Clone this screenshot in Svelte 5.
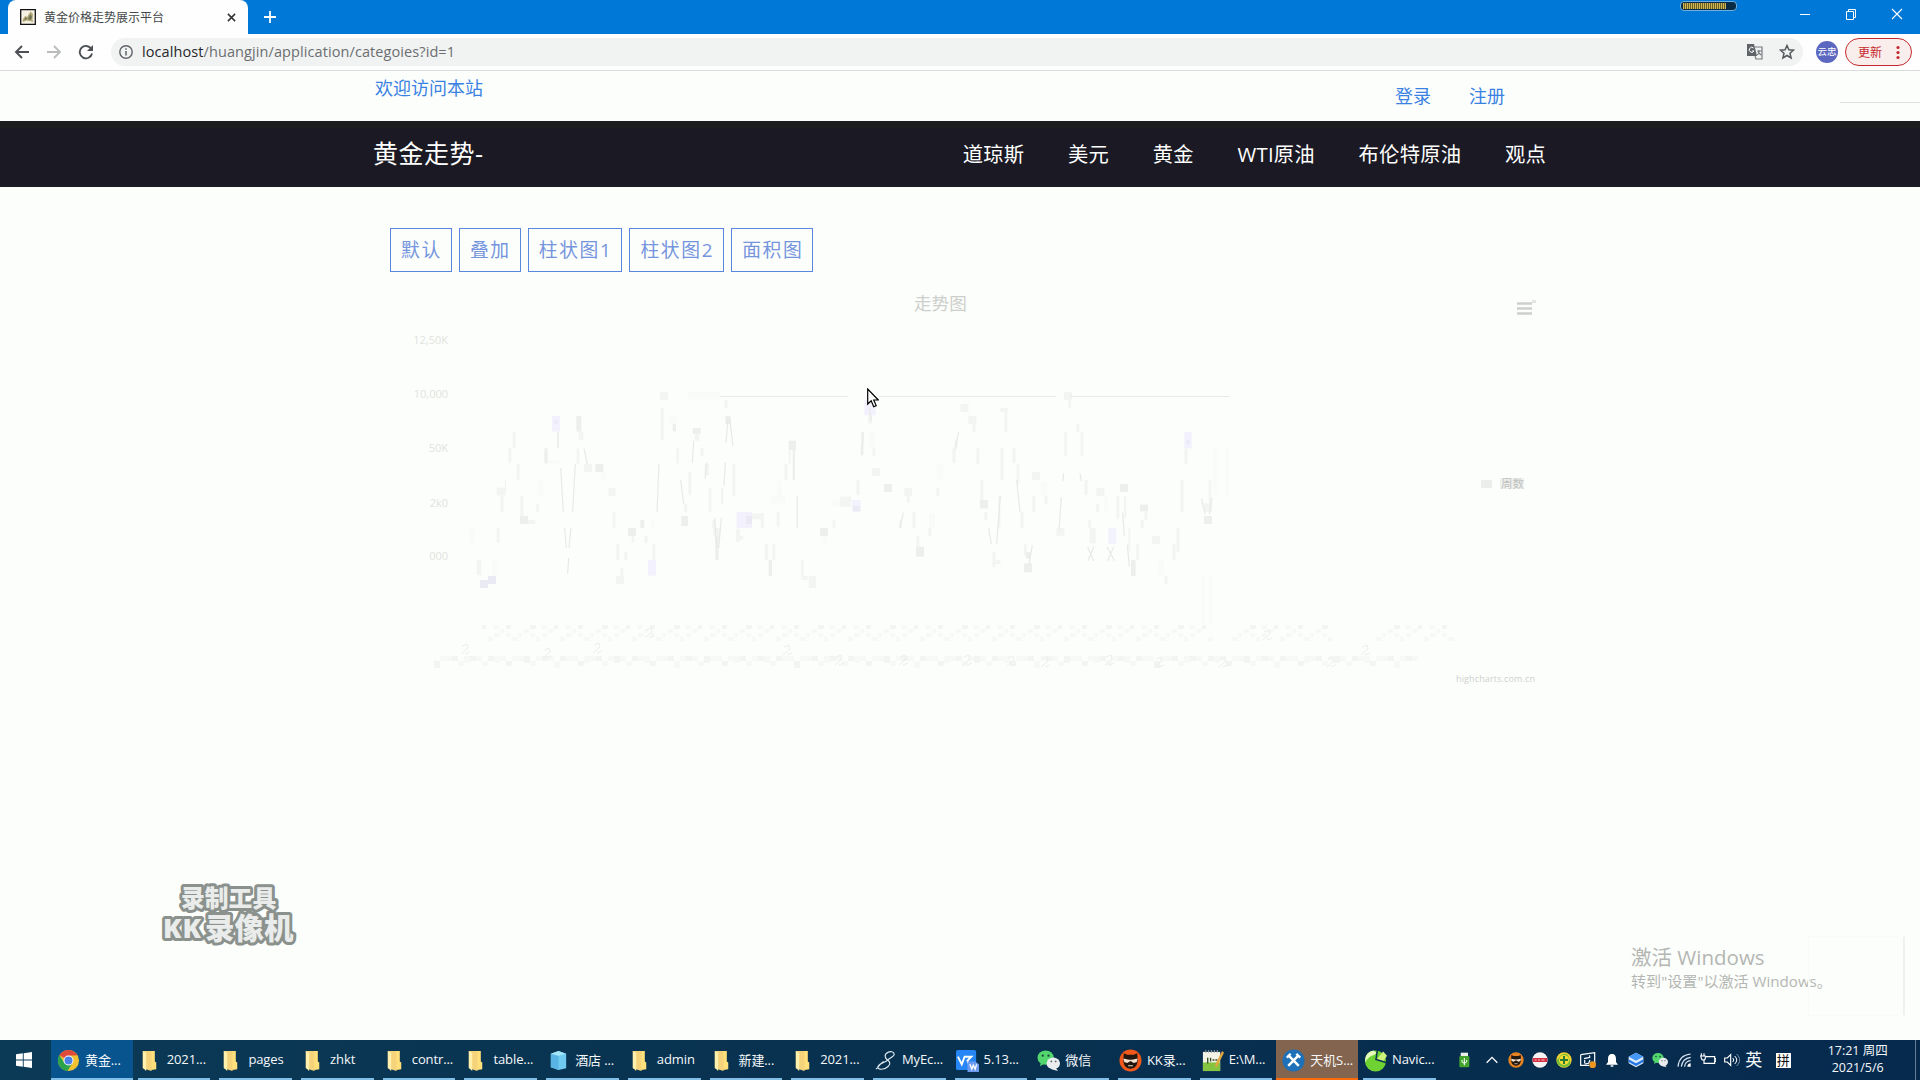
<script>
  const tabs = [
    ['chrome', '黄金...'], ['folder', '2021...'], ['folder', 'pages'], ['folder', 'zhkt'],
    ['folder', 'contr...'], ['folder', 'table...'], ['server', '酒店 ...'], ['folder', 'admin'],
    ['folder', '新建...'], ['folder', '2021...'], ['swirl', 'MyEc...'], ['wps', '5.13...'],
    ['wechat', '微信'], ['kk', 'KK录...'], ['npp', 'E:\\M...'], ['tools', '天机S...'], ['navicat', 'Navic...']
  ];
  const links = ['道琼斯', '美元', '黄金', 'WTI原油', '布伦特原油', '观点'];
  const modes = ['默认', '叠加', '柱状图1', '柱状图2', '面积图'];
  const tray = ['usb', 'up', 'cat', 'flag', 'plus', 'display', 'bell', 'cube', 'wechat', 'wifi', 'battery', 'volume'];

  // Plot marks: x, y, width, height, shade, in thirds of a pixel
  const shades = ['#f9fbf8', '#f3f5f2', '#ecefeb', '#f2f1fd', '#e9eaf3'];
  const left = [
    [208,445,16,45,0],[230,540,14,46,1],[276,540,14,46,0],[240,600,24,24,4],[264,588,24,24,4],[290,445,9,44,1],[301,348,10,48,1],
    [290,323,26,24,1],[314,300,4,34,1],[325,205,9,45,1],[338,156,9,48,1],[350,252,9,47,1],[361,348,9,62,1],
    [360,408,24,24,2],[384,420,22,12,1],[409,372,8,24,1],[413,300,18,46,0],[433,205,10,45,2],[445,240,34,11,0],
    [456,108,24,47,3],[463,120,10,12,4],[471,156,6,49,2],[529,108,15,47,2],[536,155,14,24,1],[530,205,8,47,1],
    [552,252,24,24,1],[586,252,24,24,2],[602,276,18,22,0],[625,324,22,24,1],[638,396,8,48,1],[649,492,9,48,1],
    [661,564,9,24,1],[648,588,24,24,1],[673,516,9,24,1],[684,444,24,24,2],[695,468,8,20,1],[721,420,12,24,2],
    [733,468,10,22,1],[757,492,9,48,1],[744,540,24,47,3],[755,420,8,24,0],[780,36,24,24,1],[782,84,9,96,1],
    [818,130,10,24,2],[808,108,24,24,0],[829,205,8,45,1],[852,372,10,24,1],[844,408,20,30,2],[865,276,9,70,1],
    [878,144,24,18,2],[884,160,14,22,1],[901,205,10,24,1],[926,324,8,72,1],[914,252,13,34,1],[973,60,10,24,1],
    [976,108,16,24,2],[997,252,9,96,1],[963,324,7,48,1],[937,420,8,24,1],[946,444,10,96,2],[940,444,20,24,1],
    [1010,396,46,48,3],[1038,408,18,24,4],[1056,400,36,18,1],[1082,400,10,44,1],[1008,446,12,40,1],[1020,468,10,12,1],
    [1094,492,11,48,1],[1117,492,9,48,1],[1106,540,10,48,2],[1130,396,9,46,1],[1112,348,44,22,0],[1132,302,14,46,0],
    [1153,252,10,48,1],[1166,182,22,28,2],[1166,210,6,40,1],[1178,210,7,90,2],[1189,348,5,96,2],[1203,540,8,48,1],
    [1205,588,18,12,1],[1226,588,22,36,1],[1260,444,24,24,2],[1268,468,14,20,0],[1298,420,8,24,1],[1298,358,50,22,0],[1326,362,22,14,4],[864,36,96,22,0]
  ];
  const right = [
    [0,350,34,30,1],[36,360,26,34,3],[40,378,20,16,4],[73,60,34,46,3],[84,105,12,26,1],[62,156,9,70,1],[86,156,20,46,0],[97,205,9,24,1],
    [49,300,10,46,1],[96,264,24,24,1],[132,312,24,24,2],[193,324,23,24,1],[200,348,10,20,1],[177,420,8,24,1],
    [217,396,10,48,1],[229,468,9,40,1],[228,500,24,30,2],[265,444,9,24,1],[267,400,18,44,0],[289,324,9,24,1],
    [290,252,20,46,0],[337,205,10,45,1],[344,182,8,22,1],[361,72,24,24,1],[385,108,24,24,1],[397,132,10,24,1],
    [409,205,9,48,1],[421,300,9,60,1],[420,360,24,25,2],[433,396,9,24,1],[457,516,10,46,1],[467,540,14,12,1],
    [475,348,6,96,1],[481,205,10,95,1],[481,84,22,12,1],[493,96,9,60,1],[517,205,10,45,1],[530,252,8,60,1],
    [541,396,10,48,1],[552,492,8,36,1],[558,516,12,20,2],[552,550,24,27,2],[577,348,9,48,1],[576,276,24,24,1],
    [602,304,20,42,0],[613,348,10,24,1],[649,444,24,24,1],[672,36,24,24,1],[685,60,8,24,1],[673,156,8,72,1],
    [709,132,9,24,1],[722,156,8,72,1],[733,300,10,46,1],[745,420,8,24,1],[749,444,18,46,1],[769,324,24,24,1],
    [768,372,10,24,1],[793,348,9,44,0],[805,445,24,46,3],[829,348,9,70,1],[840,312,24,24,2],[852,348,7,66,1],
    [865,444,6,70,1],[889,492,8,48,1],[873,540,14,48,2],[900,374,24,20,2],[913,394,9,25,1],[902,420,9,24,1],
    [936,468,24,24,1],[955,540,18,46,0],[973,588,10,24,1],[997,492,10,48,1],[1009,444,10,72,1],[1021,300,10,96,1],
    [1033,205,10,46,1],[1033,156,22,49,3],[1040,180,9,12,4],[1092,370,24,26,1],[1092,408,24,24,2],[1106,300,8,70,1],
    [1120,205,10,140,0],[1156,205,10,140,0],[1084,588,12,144,0],[1106,588,12,144,0]
  ];
  // Tick-label texture along the horizontal axis
  const ticks = [];
  for (let i = 0; i < 162; i++) {
    const x = 482 + i * 6;
    if ((x > 1210 && x < 1232) || (x > 1330 && x < 1372)) continue;
    ticks.push([x, 625 + (i * 7 % 4) * 4, 4 + i % 3, 4, (i * 5) % 4 === 0 ? 1 : 0]);
    if (i % 3) ticks.push([x, 625 + ((i * 5 + 2) % 4) * 4, 5, 4, 0]);
  }
  for (let i = 0; i < 164; i++) {
    const x = 434 + i * 6;
    ticks.push([x, 656 + (i * 3 % 4 === 0 ? 5 : 0), 6, i % 5 === 0 ? 7 : 5, i % 3 === 0 ? 1 : 0]);
  }
  const curls = [[466,649],[548,653],[598,648],[650,633],[788,650],[840,660],[904,660],[968,660],[1012,661],[1046,662],[1110,660],[1160,662],[1224,662],[1268,635],[1332,662],[1366,650]];
</script>

{#snippet icon(name)}
  <svg class="ic" viewBox="0 0 24 24">
    {#if name === 'chrome'}
      <circle cx="12" cy="12" r="11" fill="#f2c230" />
      <path d="M12 12 2.500 6.500A11 11 0 0 1 21.500 6.500L12 7z" fill="#e04a3a" />
      <path d="M2.500 6.500A11 11 0 0 0 11 23l5-8.500L12 12 7.500 14z" fill="#2ba24c" />
      <circle cx="12" cy="12" r="5.200" fill="#fff" /><circle cx="12" cy="12" r="4.200" fill="#4a80e8" />
    {:else if name === 'folder'}
      <path d="M4 2h10v17l-1 4-9-3z" fill="#f5d37a" /><path d="M13 2h3.500v11l1.500 1v7l-5 1z" fill="#ffe07a" />
      <path d="M4 2 7.500 4v19L4 19.500z" fill="#fff0ae" />
    {:else if name === 'server'}
      <path d="M4 5 12 2l8 3v15l-8 2-8-3z" fill="#6fcbf0" /><path d="M4 5l8 2v15l-8-3z" fill="#58b4e4" /><path d="M4 5l8-3 8 3-8 2z" fill="#a4e4f8" />
    {:else if name === 'swirl'}
      <path d="M21 5C19 0 10 4 12 9c2 4 7 4 3 9-4 4-11 4-11 1 0-4 7-4 11-8 4-3 7-4 6-6M2 21c4-3 3-5 8-8" fill="none" stroke="#dce7ef" stroke-width="1.200" />
    {:else if name === 'wps'}
      <rect x="0" y="1" width="21" height="21" rx="2" fill="#2786f5" /><path d="m2 8 4 8 3-8h7l-4 4 1 3" fill="none" stroke="#fff" stroke-width="2" /><path d="M12 13h8l4 3v8H12z" fill="#6c9bf0" /><path d="m14.500 16 2 5 1.500-4 2 4 1.500-5" fill="none" stroke="#fff" stroke-width="1.400" />
    {:else if name === 'wechat'}
      <ellipse cx="9" cy="9" rx="8.500" ry="7.500" fill="#53d66e" /><path d="m4 14-1 4 5-3z" fill="#53d66e" /><circle cx="6" cy="7" r="1.200" fill="#174b38" /><circle cx="12" cy="7" r="1.200" fill="#174b38" />
      <ellipse cx="17" cy="15" rx="7" ry="6.200" fill="#e9edf0" /><path d="m19 19 3 4-7-2z" fill="#e9edf0" /><circle cx="15" cy="13" r=".9" fill="#556666" /><circle cx="19.500" cy="13" r=".9" fill="#556666" />
    {:else if name === 'kk' || name === 'cat'}
      <circle cx="12" cy="12" r="11.500" fill={name === 'kk' ? '#f0581c' : '#e8831f'} /><path d="M5 4.500 8.500 6h7L19 4.500l.5 7.500c-.5 5.500-3 8.500-7.500 8.500S5 17.500 4.500 12z" fill="#22180f" /><path d="m4.500 10 6 1.200h3l6-1.200-1 3.500-3 1-3.500-2-3.500 2-3-1z" fill="#f5e3d0" /><path d="M9.500 17.500h5" stroke="#f5e3d0" />
    {:else if name === 'npp'}
      <path d="M2 3h18v20H2z" fill="#f3f4e6" /><path d="M2 14h18v9H2z" fill="#84c440" /><path d="M5 1v3m3-3v3m3-3v3m3-3v3m3-3v3" stroke="#9a9fa0" /><path d="M7 9v6m3-6v4m2-1.500h2m1 0h2" stroke="#354a25" stroke-width="1.400" /><path d="m22 2 2 2-7 14-2 1v-3z" fill="#e2a63f" />
    {:else if name === 'tools'}
      <circle cx="12" cy="12" r="11.500" fill="#1e70b8" /><path d="m7 7 10.500 10.500M17 7 6.500 17.500" stroke="#fff" stroke-width="2.600" /><path d="m5 9 4-4M15 5l4 4" stroke="#fff" stroke-width="2.400" />
    {:else if name === 'navicat'}
      <circle cx="12" cy="12.500" r="11" fill="#6fd233" /><path d="M1.500 14C4 7 12 7 13 4l-3-2.500C4 2 0 8 1.500 14" fill="#e6f8ba" /><path d="M13.500 10.500 20 2.500l4 4.500-4 6z" fill="#cdf37d" /><path d="m14 1-1.500 10 10.500 3" fill="none" stroke="#0b3450" stroke-width="1.600" />
    {:else if name === 'usb'}
      <path d="M7 1h11v5H7z" fill="#e8f0e8" /><rect x="5" y="6" width="15" height="17" rx="2" fill="#43a52d" /><path d="M12.500 9v11M9 12v3l3.500 2 3.500-2v-3" fill="none" stroke="#fff" stroke-width="1.500" />
    {:else if name === 'up'}
      <path d="m4 16 8-8 8 8" fill="none" stroke="#fff" stroke-width="2" />
    {:else if name === 'flag'}
      <circle cx="12" cy="12" r="11.500" fill="#f4f3f3" /><path d="M1 9h22v6H1z" fill="#d42e42" /><path d="M4 12h3m2 0h3m2 0h5" stroke="#f3c6cb" stroke-width="1.500" />
    {:else if name === 'plus'}
      <circle cx="12" cy="12" r="11.500" fill="#f5d32e" /><path d="M1 12a11 11 0 0 0 21 4L18 5A8 8 0 0 0 5 8z" fill="#75bd36" /><circle cx="12" cy="12" r="7.500" fill="#f7dc38" /><path d="M12 6v12M6 12h12" stroke="#287c31" stroke-width="3" />
    {:else if name === 'display'}
      <path d="m1 4 21-3v17M1 4v16h13M6 10l9-2m0 4-2 5-6 1m0-6v5m8-9-1-3" fill="none" stroke="#fff" stroke-width="1.800" /><circle cx="19" cy="19" r="5" fill="#ed951e" />
    {:else if name === 'bell'}
      <path d="M12 3c-5 0-6 4-6 8v4l-3 4h18l-3-4v-4c0-4-1-8-6-8m-2 17h4v2h-4z" fill="#fff" />
    {:else if name === 'cube'}
      <path d="m1 7 11-6 11 6v10l-11 6-11-6z" fill="#e4effc" /><path d="m1 7 11-6 11 6-11 6z" fill="#4598f7" /><path d="m1 11 11 6 11-6v4l-11 6-11-6z" fill="#2577e4" />
    {:else if name === 'wifi'}
      <path d="M3 22C4 11 11 4 22 3M8 22C9 14 14 9 22 8M13 22c0-5 4-9 9-9" fill="none" stroke="#dce6ee" stroke-width="1.800" /><path d="M17 22c0-3 2-5 5-5v5z" fill="#fff" />
    {:else if name === 'battery'}
      <path d="M9 7h13v10H6v-5M2 2v4m4-4v4M1 6h7v3c0 4-6 4-6 0zM22 10h2v4h-2" fill="none" stroke="#fff" stroke-width="1.700" />
    {:else if name === 'volume'}
      <path d="M1 9h4l5-5v16l-5-5H1z" fill="none" stroke="#fff" stroke-width="1.700" /><path d="M13 9c2 2 2 4 0 6M16 6c4 4 4 8 0 12" fill="none" stroke="#fff" stroke-width="1.500" /><path d="M19 3c6 6 6 12 0 18" fill="none" stroke="#7890a0" stroke-width="1.500" />
    {/if}
  </svg>
{/snippet}

<div class="desktop">
  <header class="title">
    <div class="tab">
      <svg class="fav" viewBox="0 0 16 16"><path d="M.7.7h14.600v14.600H.7z" fill="#f4f1e4" stroke="#111" stroke-width="1.300" /><path d="m2.500 11 2.500-4 2 1 3.500-5.500L13 5l-.5 6 1 2-4-1-3-.5-3.500 1.500z" fill="#b3a874" /><path d="m8 10 2.500-5 1.500 3-1.500 3zM4 11l2-3 1 2z" fill="#6b7058" /></svg>
      <span>黄金价格走势展示平台</span>
      <svg class="x" viewBox="0 0 10 10"><path d="m1 1 8 8m0-8L1 9" stroke="#333" stroke-width="1.700" /></svg>
    </div>
    <svg class="add" viewBox="0 0 12 12"><path d="M6 0v12M0 6h12" stroke="#fff" stroke-width="1.800" /></svg>
    <div class="gap"></div>
    <div class="meter"><i></i></div>
    <div class="win"><svg viewBox="0 0 12 12"><path d="M1 6.500h10" stroke="#fff" /></svg></div>
    <div class="win"><svg viewBox="0 0 12 12"><path d="M1.500 3.500h7v8h-7zM3.500 3V1.500h7v8H9" fill="none" stroke="#fff" /></svg></div>
    <div class="win"><svg viewBox="0 0 12 12"><path d="m1 1 10 10m0-10L1 11" stroke="#fff" stroke-width="1.100" /></svg></div>
  </header>

  <div class="bar">
    <svg class="nav-ic" viewBox="0 0 16 16"><path d="M15 8H2m6-6L2 8l6 6" fill="none" stroke="#4c4f53" stroke-width="1.900" /></svg>
    <svg class="nav-ic" viewBox="0 0 16 16"><path d="M1 8h13M8 2l6 6-6 6" fill="none" stroke="#b9bbbd" stroke-width="1.800" /></svg>
    <svg class="nav-ic" viewBox="0 0 16 16"><path d="M13.200 4.800A6.200 6.200 0 1 0 14 9.500" fill="none" stroke="#4c4f53" stroke-width="1.900" /><path d="M15 1v6H9z" fill="#4c4f53" /></svg>
    <div class="addr">
      <svg class="info" viewBox="0 0 14 14"><circle cx="7" cy="7" r="6.200" fill="none" stroke="#5f6368" stroke-width="1.400" /><path d="M7 6v4.500M7 3.200v1.500" stroke="#5f6368" stroke-width="1.500" /></svg>
      <span class="url"><b>localhost</b>/huangjin/application/categoies?id=1</span>
      <svg class="tr" viewBox="0 0 16 16"><path d="M0 0h7l3 12H0z" fill="#606468" /><path d="M8 3h7v12H9l-1-3m2-5h5m-3-1v2c0 2-2 3-2 3m1-3 3 3" fill="none" stroke="#777b7e" stroke-width="1.200" /><path d="M6.500 4A2.500 2.500 0 1 0 7 7H5" fill="none" stroke="#fff" /></svg>
      <svg class="star" viewBox="0 0 16 16"><path d="m8 1.500 1.900 4.300 4.600.4-3.500 3.100 1.100 4.700L8 11.500 3.900 14 5 9.300 1.500 6.200l4.600-.4z" fill="none" stroke="#55585c" stroke-width="1.500" /></svg>
    </div>
    <div class="avatar">云忠</div>
    <div class="update"><span>更新</span><svg viewBox="0 0 4 14"><circle cx="2" cy="2" r="1.600" /><circle cx="2" cy="7" r="1.600" /><circle cx="2" cy="12" r="1.600" /></svg></div>
  </div>

  <main>
    <div class="top">
      <span class="hello">欢迎访问本站</span><span class="auth">登录</span><span class="auth">注册</span>
      <i class="dash"></i>
    </div>
    <nav><span class="brand">黄金走势-</span><div class="links">{#each links as l}<span>{l}</span>{/each}</div></nav>
    <div class="modes">{#each modes as m}<button>{m}</button>{/each}</div>
    <svg class="chart" viewBox="390 280 1160 420">
      <text x="914" y="310" font-size="17.600" fill="#cdcfcc">走势图</text>
      <g fill="#e1e3e0" font-size="11">
        <text x="448" y="344" text-anchor="end">12,50K</text><text x="448" y="398" text-anchor="end">10,000</text>
        <text x="448" y="452" text-anchor="end">50K</text><text x="448" y="507" text-anchor="end">2k0</text><text x="448" y="560" text-anchor="end">000</text>
      </g>
      <g transform="translate(400 380) scale(.33333)">
        {#each left as [x, y, w, h, s]}<rect {x} {y} width={w} height={h} fill={shades[s]} />{/each}
        <path class="ln" d="m482 264 8 132m36-144-8 144m-24 48 5 60m14-60-6 60m-1 30-3 48M777 252l-6 144m71-96 9 72m30-190-4 66m43 0-5 48m69-180-6 72m11-72 10 82m-23 50-4 70m-28 96 6 90m14-90-8 90M552 205l10 48" />
      </g>
      <g transform="translate(840 380) scale(.33333)">
        {#each right as [x, y, w, h, s]}<rect {x} {y} width={w} height={h} fill={shades[s]} />{/each}
        <path class="ln" d="m70 156-5 70m23-144 6 40m96 276-10 46m176-288-11 52m101 236 8 48m27-144-11 144m60-192 10 96m37 100-11 60m98-204-7 96m14-168-3 24m52-24 4 24m19 196 18 42m0-42-17 42m57-42 22 42m-2-42-18 42m45-144 5 70m9 26 6 66m217-204 10 46m21-48-8 48" />
      </g>
      <path d="M720 396.500h128M879 396.500h177M1070 396.500h160" stroke="#e9ebe9" />
      {#each ticks as [x, y, w, h, s]}<rect {x} {y} width={w} height={h} fill={s ? '#f3f5f2' : '#f7f9f6'} />{/each}
      {#each curls as [x, y]}<path d="m{x - 4} {y - 3} 5-2 1 4-7 6m4 0 5-2" fill="none" stroke="#eceeeb" />{/each}
      <path d="M1517 303.500h15M1517 308.500h15M1517 313.500h15" stroke="#ced0ce" stroke-width="2.500" />
      <path d="M1532 301.500h4" stroke="#e3e5e3" stroke-width="3" />
      <rect x="1481" y="480" width="11" height="8" fill="#eceeec" />
      <rect x="1500" y="478" width="24" height="11" fill="#eff1ee" />
      <text x="1501" y="488" font-size="11.500" fill="#bfc1be">周数</text>
      <text x="1456" y="682" font-size="9" fill="#cfd1cf" textLength="79">highcharts.com.cn</text>
    </svg>
  </main>

  <div class="task">
    <div class="start"><svg viewBox="0 0 16 16"><path d="M0 2.300 6.800 1.300v6.200H0zM7.700 1.200 16 0v7.500H7.700zM0 8.400h6.800v6.300L0 13.700zM7.700 8.400H16V16l-8.300-1.200z" fill="#fff" /></svg></div>
    {#each tabs as [n, t], i}
      <div class="app" class:on={i === 0} class:hot={i === 15}>{@render icon(n)}<span>{t}</span></div>
    {/each}
    <div class="tray">
      {#each tray as n}<div class="slot {n}">{@render icon(n)}</div>{/each}
      <span class="ying">英</span><span class="pin">拼</span>
      <div class="clock"><span>17:21 周四</span><span>2021/5/6</span></div>
      <i class="edge"></i>
    </div>
  </div>

  <svg class="mark" viewBox="0 0 144 66">
    <text font-weight="900" fill="#e9ecea" stroke="#8b918d" stroke-width="6" stroke-linejoin="round" paint-order="stroke"><tspan x="21" y="27" font-size="23.800">录制工具</tspan><tspan x="3" y="58" font-size="27" letter-spacing="1">KK</tspan><tspan x="45" y="59" font-size="29.500">录像机</tspan></text>
  </svg>
  <div class="activate"><span>激活 Windows</span><small>转到"设置"以激活 Windows。</small></div>
  <div class="ghost"></div>
  <svg class="cursor" viewBox="0 0 12 20"><path d="M.7 1v15l3.500-3.300 2.500 6 2.500-1.100-2.500-5.600h4.600z" fill="#fff" stroke="#000" stroke-width="1.200" /></svg>
</div>

<style>
  :global(body) { margin: 0; background: #fcfefb; overflow: hidden; }
  .desktop { position: relative; display: flex; flex-direction: column; width: 1920px; height: 1080px; overflow: hidden; background: #fcfefb; font-family: "Open Sans", "Noto Sans CJK SC", sans-serif; }
  svg { display: block; flex: none; }
  .title { display: flex; height: 34px; background: #0078d7; box-sizing: border-box; padding-left: 8px; flex: none; }
  .tab { width: 240px; box-sizing: border-box; padding: 0 12px 0 12px; background: #fdfefd; border-radius: 8px 8px 0 0; display: flex; align-items: center; font-size: 12px; color: #45484b; white-space: nowrap; }
  .fav { width: 16px; height: 16px; margin-right: 8px; }
  .tab span { flex: 1; }
  .x { width: 9px; height: 9px; }
  .add { width: 12px; height: 12px; margin: 11px 0 0 16px; }
  .gap { flex: 1; }
  .meter { width: 55px; height: 8px; margin: 1px 45px 0 0; border: 1px solid #6db0de; border-radius: 4px; background: #0a2b45; }
  .meter i { display: block; width: 43px; height: 6px; margin: 1px 0 0 2px; background: repeating-linear-gradient(90deg, #d2b650 0 1px, #6b6128 1px 2px); }
  .win { width: 46px; height: 28px; display: grid; place-items: center; }
  .win svg { width: 12px; height: 12px; }
  .bar { height: 37px; flex: none; box-sizing: border-box; border-bottom: 1px solid #dadcdb; background: #fdfefd; display: flex; align-items: center; padding: 0 8px 0 14px; }
  .nav-ic { width: 16px; height: 16px; margin-right: 16px; }
  .addr { width: 1692px; height: 28px; margin-left: 1px; border-radius: 14px; background: #f1f3f2; display: flex; align-items: center; box-sizing: border-box; padding: 0 8px 0 8px; }
  .info { width: 14px; height: 14px; margin-right: 9px; }
  .url { flex: 1; font-size: 14.500px; color: #6b6e71; letter-spacing: .09px; line-height: 20px; }
  .url b { font-weight: 400; color: #25282b; }
  .tr, .star { width: 16px; height: 16px; }
  .star { margin-left: 16px; }
  .avatar { width: 22px; height: 22px; border-radius: 50%; background: #5c68c0; color: #fff; font-size: 9.500px; line-height: 22px; text-align: center; margin-left: 13px; white-space: nowrap; }
  .update { width: 67px; height: 28px; box-sizing: border-box; border: 1px solid #c5282c; border-radius: 14px; background: #faeeec; color: #c5282c; margin-left: auto; display: flex; align-items: center; justify-content: space-between; padding: 0 11px 0 12px; font-size: 12px; }
  .update svg { width: 4px; height: 15px; fill: #c5282c; }
  main { flex: 1; min-height: 0; }
  .top { height: 50px; display: flex; align-items: flex-start; padding-left: 375px; color: #3a82e2; font-size: 18px; line-height: 26px; }
  .hello { width: 1020px; margin-top: 4px; }
  .auth { width: 74px; margin-top: 12px; }
  .dash { width: 80px; height: 1px; background: #dfe1df; margin: 31px 0 0 auto; }
  nav { height: 66px; background: linear-gradient(#1d1d1f 0 7px, #1b1a24 7px); display: flex; align-items: center; color: #fff; box-sizing: border-box; padding: 0 374px 0 373px; justify-content: space-between; }
  .brand { font-size: 25px; line-height: 36px; margin-top: -2px; letter-spacing: .5px; }
  .links { display: flex; gap: 43.700px; font-size: 20.300px; line-height: 28px; white-space: nowrap; letter-spacing: .25px; }
  .modes { display: flex; gap: 7px; padding: 41px 0 0 390px; height: 44px; }
  button { height: 44px; box-sizing: border-box; padding: 0 9px 2px 10px; border: 1px solid #5b86dd; background: transparent; color: #7594de; font: 400 18.800px "Open Sans", "Noto Sans CJK SC", sans-serif; letter-spacing: 1.650px; }
  .chart { width: 1160px; height: 420px; margin: 8px 0 0 390px; }
  .ln { fill: none; stroke: #e6e9e5; stroke-width: 3.500; }
  .task { height: 40px; flex: none; background: linear-gradient(90deg, #0b3a56, #08314f 45%, #062a4e); display: flex; color: #f5f8fa; font-size: 13px; }
  .start { width: 51px; display: grid; place-items: center; box-sizing: border-box; padding-right: 3px; }
  .start svg { width: 16px; height: 16px; }
  .app { position: relative; width: 81.700px; flex: none; box-sizing: border-box; padding-left: 6px; display: flex; align-items: center; white-space: nowrap; letter-spacing: -.1px; }
  .app .ic { width: 23px; height: 23px; margin-right: 5px; }
  .app span { padding-bottom: 2px; }
  .app::after { content: ""; position: absolute; left: 5px; right: 4px; bottom: 0; height: 2px; background: #82bfe8; }
  .on { background: #07548f; }
  .hot { background: #83644e; }
  .on::after, .hot::after { left: 0; right: 0; }
  .hot::after { background: #fb6a0b; }
  .tray { display: flex; align-items: center; flex: 1; padding-left: 12px; }
  .slot { width: 24px; flex: none; display: grid; place-items: center; }
  .slot .ic { width: 16px; height: 16px; }
  .usb { margin-right: 4px; }
  .ying { width: 20px; text-align: center; font-size: 17px; line-height: 24px; }
  .pin { width: 15px; height: 15px; line-height: 15px; background: #fff; color: #111; font-size: 13px; text-align: center; margin-left: 12px; overflow: hidden; }
  .clock { width: 90px; margin: 0 0 2px 22px; display: flex; flex-direction: column; text-align: center; font-size: 12.500px; line-height: 17px; }
  .edge { width: 1px; height: 40px; margin: 0 4px 0 auto; background: #667f94; }
  .mark { position: absolute; left: 160px; top: 880px; width: 144px; height: 66px; }
  .activate { position: absolute; left: 1631px; top: 943px; display: flex; flex-direction: column; color: #b4b6b3; font-size: 20.500px; line-height: 28px; white-space: nowrap; }
  .activate small { font-size: 15.100px; line-height: 20px; }
  .ghost { position: absolute; left: 1808px; top: 936px; width: 97px; height: 80px; border: 1px solid #f9fbf8; border-right: 2px solid #f0f1ef; box-sizing: border-box; }
  .cursor { position: absolute; left: 867px; top: 388px; width: 12px; height: 20px; }
</style>
